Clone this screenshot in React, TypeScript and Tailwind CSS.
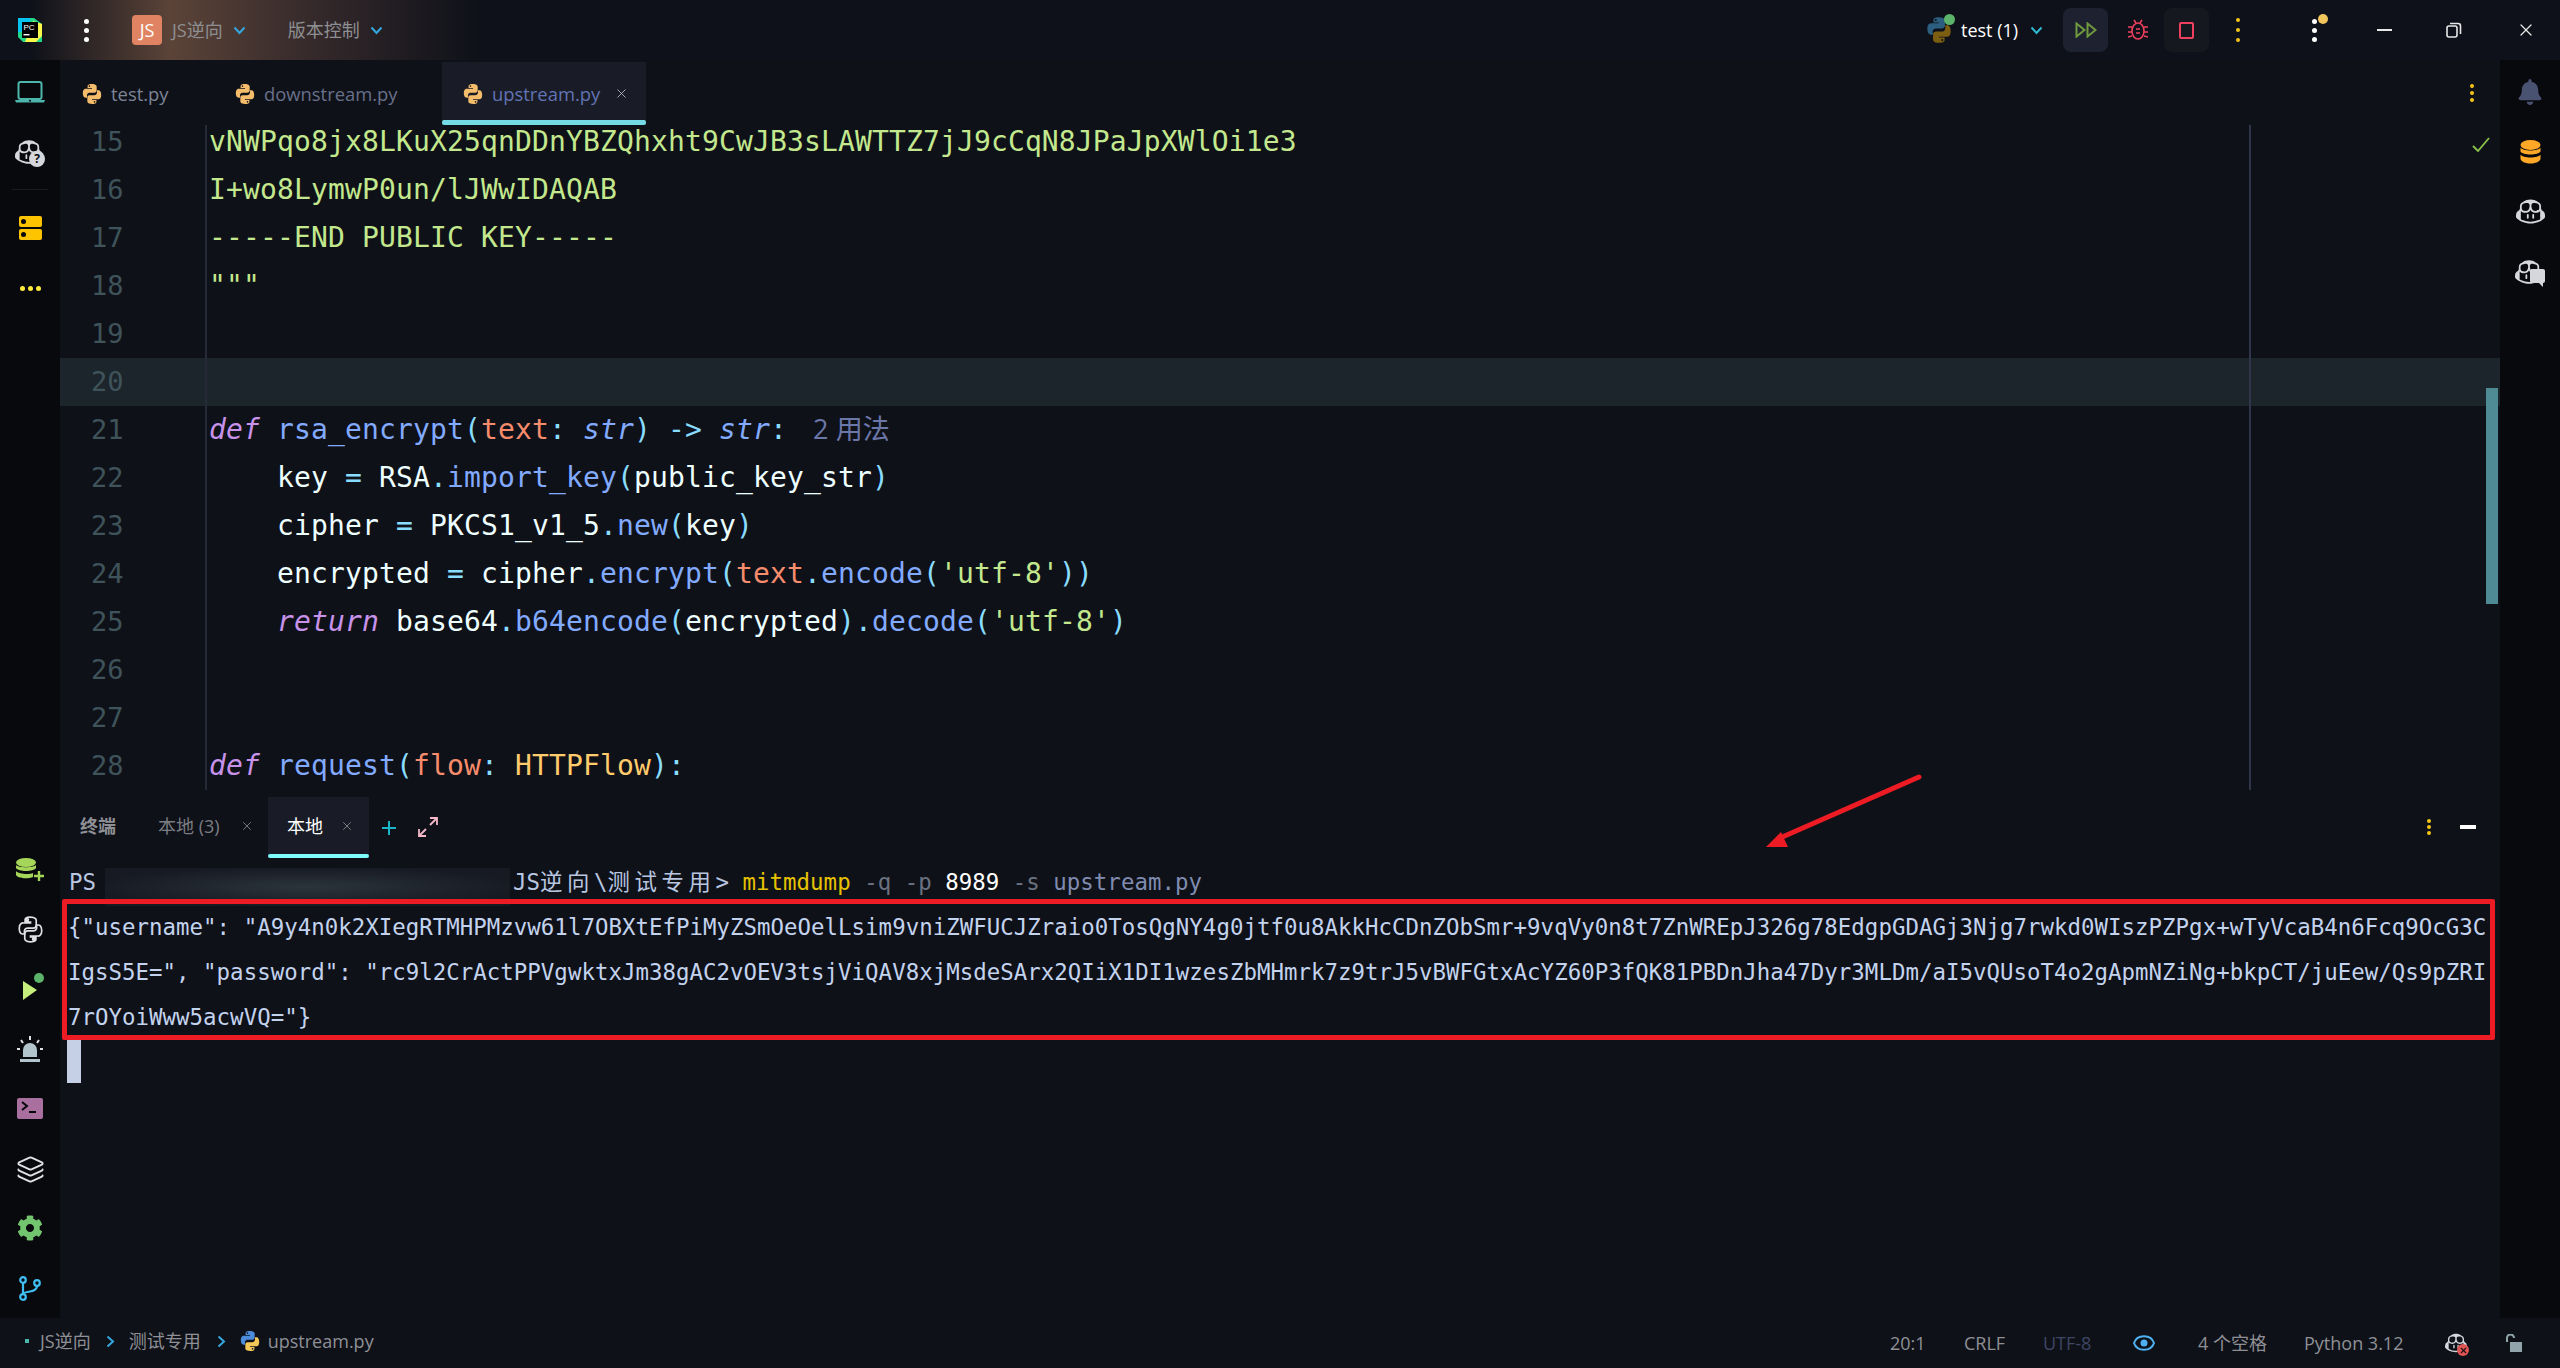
import type { ReactNode } from 'react'
import { GoCopilot } from 'react-icons/go'
import { FaBell, FaCog } from 'react-icons/fa'
import { Layers, X } from 'lucide-react'

const ui = "font-['Open_Sans','Noto_Sans_CJK_SC',sans-serif]"
const mono = "font-['DejaVu_Sans_Mono','Noto_Sans_CJK_SC',monospace]"

const pyTop = 'M11.9 1C6.9 1 7.2 3.2 7.2 3.2v2.3h4.8v.7H5.3S2 5.8 2 11s2.9 5 2.9 5h1.7v-2.4s-.1-2.9 2.9-2.9h4.9s2.7 0 2.7-2.7V3.7S17 1 11.9 1zM9.2 2.5a.9.9 0 110 1.8.9.9 0 010-1.8z'
const pyBottom = 'M12.1 23c5 0 4.7-2.2 4.7-2.2v-2.3H12v-.7h6.7S22 18.2 22 13s-2.9-5-2.9-5h-1.7v2.4s.1 2.9-2.9 2.9H9.6s-2.7 0-2.7 2.7v4.3S7 23 12.1 23zm2.7-1.5a.9.9 0 110-1.8.9.9 0 010 1.8z'

function PyIcon({ size = 22, top = '#f5bd6b', bottom = '#f5bd6b' }: { size?: number; top?: string; bottom?: string }) {
  return (
    <svg width={size} height={size} viewBox="0 0 24 24" className="shrink-0">
      <path fill={top} fillRule="evenodd" d={pyTop} />
      <path fill={bottom} fillRule="evenodd" d={pyBottom} />
    </svg>
  )
}

function Chevron({ className = '' }: { className?: string }) {
  return (
    <svg width="13" height="9" viewBox="0 0 13 9" className={`shrink-0 ${className}`}>
      <path d="M1.5 1.5 6.5 7l5-5.5" fill="none" stroke="currentColor" strokeWidth="2" />
    </svg>
  )
}

function Dots({ className = '', gap = 'gap-[6px]', size = 'size-[4px]' }: { className?: string; gap?: string; size?: string }) {
  return (
    <div className={`flex flex-col ${gap} ${className}`}>
      <span className={`${size} rounded-full bg-current`} />
      <span className={`${size} rounded-full bg-current`} />
      <span className={`${size} rounded-full bg-current`} />
    </div>
  )
}

function TitleBar() {
  return (
    <div className={`${ui} flex h-[60px] shrink-0 items-center bg-[linear-gradient(90deg,#0e1119_30px,#5b4338_170px,#33282a_320px,#0e1119_480px)] text-[18px]`}>
      <svg width="26" height="26" viewBox="0 0 26 26" className="ml-[17px] shrink-0">
        <path d="M1 1h16l8 6v18H6l-5-5z" fill="#21d789" />
        <path d="M1 1h12v14H1z" fill="#07c3f2" />
        <path d="M16 4l9 3v12l-6 6H8z" fill="#fcf84a" />
        <rect x="5" y="5" width="16" height="16" fill="#000" />
        <text x="6.5" y="12.5" fontSize="8" fill="#fff" fontFamily="Liberation Sans">PC</text>
        <rect x="6.5" y="17" width="6" height="1.4" fill="#fff" />
      </svg>
      <Dots className="ml-[41px] text-white" gap="gap-[4px]" size="size-[5px]" />
      <div className="ml-[43px] flex h-[30px] w-[30px] items-center justify-center rounded-[4px] bg-[#e08362] text-[18px] text-white">JS</div>
      <span className="ml-[10px] text-[#8e8f92]">JS逆向</span>
      <Chevron className="ml-[10px] text-[#35a7de]" />
      <span className="ml-[42px] text-[#8e8f92]">版本控制</span>
      <Chevron className="ml-[10px] text-[#35a7de]" />

      <div className="ml-auto flex items-center">
        <div className="relative">
          <PyIcon size={28} top="#2c5f7f" bottom="#7b5e12" />
          <span className="absolute -right-[2px] -top-[2px] size-[11px] rounded-full bg-[#5cb36a]" />
        </div>
        <span className="ml-[8px] w-[62px] text-white">test (1)</span>
        <Chevron className="ml-[7px] text-[#2fb8d0]" />
        <div className="ml-[20px] flex h-[44px] w-[45px] items-center justify-center rounded-[8px] bg-[#1e2130]">
          <svg width="22" height="16" viewBox="0 0 22 16">
            <path d="M1.5 1.5 9.5 8l-8 6.5zM12.5 1.5l8 6.5-8 6.5z" fill="none" stroke="#6f9a3d" strokeWidth="2" />
          </svg>
        </div>
        <div className="ml-[6px] flex w-[47px] justify-center">
          <svg width="20" height="22" viewBox="0 0 20 22" fill="none" stroke="#f0405f" strokeWidth="1.6">
            <ellipse cx="10" cy="12" rx="6" ry="8" />
            <path d="M6 1l2 3M14 1l-2 3M0 8h4M16 8h4M0 13h4M16 13h4M0 18l4-1M20 18l-4-1M8 10h4M8 14h4" />
          </svg>
        </div>
        <div className="ml-[3px] flex h-[44px] w-[45px] items-center justify-center rounded-[8px] bg-[#16181f]">
          <div className="h-[17px] w-[15px] rounded-[2px] border-[2px] border-[#f0405f]" />
        </div>
        <Dots className="ml-[27px] text-[#f5c518]" gap="gap-[6px]" />
        <div className="relative ml-[72px]">
          <Dots className="text-white" gap="gap-[4px]" size="size-[5px]" />
          <span className="absolute -top-[5px] left-[6px] size-[10px] rounded-full bg-[#f2c55c]" />
        </div>
        <div className="ml-[60px] h-[2px] w-[15px] bg-[#e8e8e8]" />
        <svg width="16" height="16" viewBox="0 0 16 16" fill="none" stroke="#e8e8e8" strokeWidth="1.6" className="ml-[54px]">
          <rect x="1" y="4" width="10" height="11" rx="2" />
          <path d="M4 1.5h8a2.5 2.5 0 0 1 2.5 2.5v8" />
        </svg>
        <X size={20} strokeWidth={1.5} className="ml-[54px] mr-[24px] text-[#e8e8e8]" />
      </div>
    </div>
  )
}

function Rail({ className = '', children }: { className?: string; children: ReactNode }) {
  return <div className={`flex w-[60px] shrink-0 flex-col items-center bg-[#08090d] ${className}`}>{children}</div>
}

function LeftRail() {
  return (
    <Rail className="justify-between pb-[17px] pt-[21px]">
      <div className="flex flex-col items-center">
        <svg width="30" height="22" viewBox="0 0 30 22" fill="none">
          <rect x="3.5" y="1" width="23" height="17" rx="2" stroke="#4db6ac" strokeWidth="2" />
          <path d="M0 19h30l-1 2.5H1z" fill="#4db6ac" />
          <circle cx="15" cy="19.8" r="1" fill="#08090d" />
        </svg>
        <div className="relative mt-[35px] h-[28px] w-[30px] text-[#d5d7dc]">
          <GoCopilot size={28} />
          <span className="absolute -bottom-[1px] right-0 flex size-[16px] items-center justify-center rounded-full bg-[#d5d7dc] text-[12px] font-bold leading-none text-[#08090d]">?</span>
        </div>
        <div className="mt-[23px] h-px w-[36px] bg-[#1a1c22]" />
        <div className="mt-[26px] flex flex-col gap-[2px]">
          {[0, 1].map(i => (
            <div key={i} className="flex h-[11px] w-[23px] items-center rounded-[2px] bg-[#ffc400] pl-[2px]">
              <span className="size-[5px] rounded-full bg-[#08090d]" />
            </div>
          ))}
        </div>
        <div className="mt-[46px] flex gap-[3px]">
          <span className="size-[5px] rounded-full bg-[#ffeb3b]" />
          <span className="size-[5px] rounded-full bg-[#ffeb3b]" />
          <span className="size-[5px] rounded-full bg-[#ffeb3b]" />
        </div>
      </div>

      <div className="flex flex-col items-center">
        <svg width="30" height="24" viewBox="0 0 30 24">
          <ellipse cx="11" cy="4.5" rx="10" ry="4.5" fill="#a5d65a" />
          <path d="M1 7c2 3 18 3 20 0v3c-2 4-18 4-20 0zM1 13c2 3 13 4 17 2v4c-4 2-15 2-17-2z" fill="#a5d65a" />
          <path d="M24 13v10M19 18h10" stroke="#a5d65a" strokeWidth="2.4" />
        </svg>
        <svg width="27" height="27" viewBox="0 0 24 24" fill="none" stroke="#dfe1e5" strokeWidth="1.5" className="mt-[34px]">
          <path d={pyTop} />
          <path d={pyBottom} />
        </svg>
        <svg width="22" height="28" viewBox="0 0 22 28" className="ml-[8px] mt-[30px]">
          <path d="M0 8l14 9-14 10z" fill="#c5ee7d" />
          <circle cx="16" cy="5" r="5" fill="#5cb36a" />
        </svg>
        <svg width="26" height="27" viewBox="0 0 26 27" className="mt-[35px]">
          <path d="M6 21v-7a7 7 0 0 1 14 0v7z" fill="#b2c5cd" />
          <rect x="3" y="23" width="20" height="3" fill="#b2c5cd" />
          <path d="M13 0v4M4 4l2 3M22 4l-2 3M0 13h3M23 13h3" stroke="#dfe1e5" strokeWidth="2" />
        </svg>
        <div className="mt-[35px] flex h-[21px] w-[26px] items-start rounded-[2px] bg-[#a9709f] pl-[4px] pt-[3px]">
          <svg width="18" height="14" viewBox="0 0 18 14" fill="none" stroke="#08090d" strokeWidth="2">
            <path d="M1 1l5 4-5 4M8 11h7" />
          </svg>
        </div>
        <Layers size={29} strokeWidth={1.6} className="mt-[36px] text-[#dfe1e5]" />
        <FaCog size={26} className="mt-[31px] text-[#73c46e]" />
        <svg width="22" height="25" viewBox="0 0 22 25" fill="none" stroke="#40bdf2" strokeWidth="2.2" className="mt-[35px]">
          <circle cx="4" cy="4" r="2.800" />
          <circle cx="4" cy="21" r="2.800" />
          <circle cx="18" cy="7" r="2.800" />
          <path d="M4 7v11M18 10c0 4-4 5-7 5.500S4 17 4 18" />
        </svg>
      </div>
    </Rail>
  )
}

function RightRail() {
  return (
    <Rail className="pt-[19px]">
      <FaBell size={26} className="text-[#4a5272]" />
      <svg width="21" height="24" viewBox="0 0 21 24" className="mt-[35px]">
        <ellipse cx="10.500" cy="5" rx="10" ry="5" fill="#ffa726" />
        <path d="M.5 7.500c2 4 18 4 20 0v4c-2 4-18 4-20 0zM.5 14.500c2 4 18 4 20 0V19c-2 6-18 6-20 0z" fill="#ffa726" />
      </svg>
      <GoCopilot size={29} className="mt-[33px] text-[#d5d7dc]" />
      <div className="relative mt-[32px] h-[28px] w-[30px] text-[#d5d7dc]">
        <GoCopilot size={28} />
        <svg width="15" height="18" viewBox="0 0 15 18" className="absolute -bottom-[1px] right-0">
          <path d="M2 0h11a2 2 0 0 1 2 2v10a2 2 0 0 1-2 2v4l-4-4H2a2 2 0 0 1-2-2V2a2 2 0 0 1 2-2z" fill="#d5d7dc" />
        </svg>
      </div>
    </Rail>
  )
}

function FileTab({ name, active, width, text }: { name: string; active?: boolean; width: string; text: string }) {
  return (
    <div className={`relative flex h-[63px] items-center ${width} ${active ? 'bg-[#191c26] pl-[20px]' : 'pl-[21px]'}`}>
      <PyIcon />
      <span className={`ml-[8px] ${text}`}>{name}</span>
      {active && <X size={15} strokeWidth={1.4} className="ml-[14px] text-[#b8bac2]" />}
      {active && <div className="absolute inset-x-0 bottom-0 h-[5px] rounded-[2px] bg-[#74dbe4]" />}
    </div>
  )
}

const C = {
  str: 'text-[#c3e88d]',
  fn: 'text-[#82aaff]',
  kw: 'italic text-[#c792ea]',
  ty: 'italic text-[#82aaff]',
  par: 'text-[#f78c6c]',
  op: 'text-[#89ddff]',
  cls: 'text-[#ffcb6b]',
  txt: 'text-[#eeffff]',
}

function S({ c, children }: { c: string; children: ReactNode }) {
  return <span className={c}>{children}</span>
}

const codeLines: ReactNode[] = [
  <S c={C.str}>vNWPqo8jx8LKuX25qnDDnYBZQhxht9CwJB3sLAWTTZ7jJ9cCqN8JPaJpXWlOi1e3</S>,
  <S c={C.str}>I+wo8LymwP0un/lJWwIDAQAB</S>,
  <S c={C.str}>-----END PUBLIC KEY-----</S>,
  <S c={C.str}>"""</S>,
  null,
  null,
  <>
    <S c={C.kw}>def</S> <S c={C.fn}>rsa_encrypt</S><S c={C.op}>(</S><S c={C.par}>text</S><S c={C.op}>:</S> <S c={C.ty}>str</S><S c={C.op}>)</S> <S c={C.op}>-&gt;</S> <S c={C.ty}>str</S><S c={C.op}>:</S>
    <span className={`${ui} ml-[26px] text-[27px] text-[#6b77a8]`}>2 用法</span>
  </>,
  <>
    {'    '}<S c={C.txt}>key</S> <S c={C.op}>=</S> <S c={C.txt}>RSA</S><S c={C.op}>.</S><S c={C.fn}>import_key</S><S c={C.op}>(</S><S c={C.txt}>public_key_str</S><S c={C.op}>)</S>
  </>,
  <>
    {'    '}<S c={C.txt}>cipher</S> <S c={C.op}>=</S> <S c={C.txt}>PKCS1_v1_5</S><S c={C.op}>.</S><S c={C.fn}>new</S><S c={C.op}>(</S><S c={C.txt}>key</S><S c={C.op}>)</S>
  </>,
  <>
    {'    '}<S c={C.txt}>encrypted</S> <S c={C.op}>=</S> <S c={C.txt}>cipher</S><S c={C.op}>.</S><S c={C.fn}>encrypt</S><S c={C.op}>(</S><S c={C.par}>text</S><S c={C.op}>.</S><S c={C.fn}>encode</S><S c={C.op}>(</S><S c={C.str}>'utf-8'</S><S c={C.op}>))</S>
  </>,
  <>
    {'    '}<S c={C.kw}>return</S> <S c={C.txt}>base64</S><S c={C.op}>.</S><S c={C.fn}>b64encode</S><S c={C.op}>(</S><S c={C.txt}>encrypted</S><S c={C.op}>).</S><S c={C.fn}>decode</S><S c={C.op}>(</S><S c={C.str}>'utf-8'</S><S c={C.op}>)</S>
  </>,
  null,
  null,
  <>
    <S c={C.kw}>def</S> <S c={C.fn}>request</S><S c={C.op}>(</S><S c={C.par}>flow</S><S c={C.op}>:</S> <S c={C.cls}>HTTPFlow</S><S c={C.op}>):</S>
  </>,
]

function Editor() {
  return (
    <div className="relative h-[665px] shrink-0 overflow-hidden">
      <div className="-mt-[7px]">
        {codeLines.map((line, i) => (
          <div key={i} className={`flex h-[48px] items-center ${i === 5 ? 'bg-[#1d252c]' : ''}`}>
            <div className={`${mono} w-[149px] shrink-0 pl-[31px] text-[27px] text-[#3f535a]`}>{i + 15}</div>
            <div className={`${mono} whitespace-pre text-[28px] tracking-[0.14px]`}>{line}</div>
          </div>
        ))}
      </div>
      <div className="absolute left-[145px] top-0 h-full w-[2px] bg-[#262a38]" />
      <div className="absolute left-[2189px] top-0 h-full w-[2px] bg-[#31354a]" />
      <div className="absolute left-[2426px] top-[263px] h-[216px] w-[12px] bg-[#4f8b94]" />
      <svg width="18" height="15" viewBox="0 0 18 15" className="absolute left-[2412px] top-[12px]">
        <path d="M1 9l5 5L17 1" fill="none" stroke="#8bc34a" strokeWidth="1.800" />
      </svg>
    </div>
  )
}

const outputLines = [
  '{"username": "A9y4n0k2XIegRTMHPMzvw61l7OBXtEfPiMyZSmOeOelLsim9vniZWFUCJZraio0TosQgNY4g0jtf0u8AkkHcCDnZObSmr+9vqVy0n8t7ZnWREpJ326g78EdgpGDAGj3Njg7rwkd0WIszPZPgx+wTyVcaB4n6Fcq9OcG3C',
  'IgsS5E=", "password": "rc9l2CrActPPVgwktxJm38gAC2vOEV3tsjViQAV8xjMsdeSArx2QIiX1DI1wzesZbMHmrk7z9trJ5vBWFGtxAcYZ60P3fQK81PBDnJha47Dyr3MLDm/aI5vQUsoT4o2gApmNZiNg+bkpCT/juEew/Qs9pZRI',
  '7rOYoiWww5acwVQ="}',
]

function Terminal() {
  return (
    <div className="flex min-h-0 flex-1 flex-col">
      <div className={`${ui} flex h-[68px] shrink-0 items-end text-[18px]`}>
        <div className="flex h-[61px] w-[98px] items-center pb-[3px] pl-[20px] font-bold text-[#8e9095]">终端</div>
        <div className="flex h-[61px] w-[110px] items-center pb-[3px] text-[#7b7d82]">
          <span>本地 (3)</span>
          <X size={14} strokeWidth={1.4} className="ml-[20px] text-[#8e9095]" />
        </div>
        <div className="relative flex h-[61px] w-[101px] items-center pb-[3px] pl-[19px] bg-[#191c26] text-white">
          <span>本地</span>
          <X size={14} strokeWidth={1.4} className="ml-[17px] text-[#8e9095]" />
          <div className="absolute inset-x-0 bottom-0 h-[4px] rounded-[2px] bg-[#7dfdff]" />
        </div>
        <svg width="16" height="16" viewBox="0 0 16 16" className="mb-[22px] ml-[12px]">
          <path d="M8 1v14M1 8h14" stroke="#19b5c9" strokeWidth="2" />
        </svg>
        <svg width="20" height="20" viewBox="0 0 20 20" fill="none" stroke="#f4b8c8" strokeWidth="1.800" className="mb-[21px] ml-[21px]">
          <path d="M12 1h7v7M19 1l-7 7M8 19H1v-7M1 19l7-7" />
        </svg>
        <Dots className="mb-[23px] ml-auto text-[#f5c518]" gap="gap-[2px]" size="size-[4px]" />
        <div className="mb-[29px] ml-[29px] mr-[24px] h-[4px] w-[16px] bg-white" />
      </div>

      <div className={`${mono} flex h-[48px] shrink-0 items-center whitespace-pre pl-[9px] pt-[2px] text-[22.4px] tracking-[0.03px] text-[#b8c6e0]`}>
        <span>PS</span>
        <div className="ml-[9px] mt-[8px] h-[38px] w-[405px] shrink-0 bg-[radial-gradient(ellipse_at_center,#2a343c_0%,#171a22_75%)]" />
        <span className="ml-[3px]">JS<span className="tracking-[4.6px]">逆向</span>\<span className="tracking-[4.6px]">测试专用</span>&gt; </span>
        <span className="text-[#e6c200]">mitmdump</span>
        <span className="text-[#6b7280]"> -q -p </span>
        <span className="text-white">8989</span>
        <span className="text-[#6b7280]"> -s </span>
        <span className="text-[#7f8cb0]">upstream.py</span>
      </div>

      <div className={`${mono} z-10 -mt-[7px] ml-[2px] h-[141px] w-[2433px] shrink-0 overflow-hidden rounded-[2px] border-[5px] border-[#ed1c24] pl-[1px] pt-px text-[22.4px] leading-[45px] tracking-[0.03px] text-[#c3d3ee]`}>
        {outputLines.map(line => (
          <div key={line} className="whitespace-pre">{line}</div>
        ))}
      </div>
      <div className="ml-[7px] h-[43px] w-[14px] shrink-0 bg-[#c5d0e6]" />
    </div>
  )
}

function StatusBar() {
  return (
    <div className={`${ui} flex h-[50px] shrink-0 items-center text-[18px] text-[#8e9095]`}>
      <div className="flex items-center pb-[4px]">
        <span className="ml-[25px] size-[4px] bg-[#4db6ac]" />
        <span className="ml-[11px]">JS逆向</span>
        <Chevron className="ml-[13px] -rotate-90 text-[#35a7de]" />
        <span className="ml-[12px]">测试专用</span>
        <Chevron className="ml-[14px] -rotate-90 text-[#35a7de]" />
        <span className="ml-[11px]"><PyIcon top="#4b8bdc" bottom="#f5c85a" /></span>
        <span className="ml-[7px]">upstream.py</span>
      </div>

      <div className="ml-auto flex items-center pr-[38px]">
        <span className="w-[74px]">20:1</span>
        <span className="w-[79px]">CRLF</span>
        <span className="w-[90px] text-[#3d4663]">UTF-8</span>
        <svg width="22" height="16" viewBox="0 0 22 16" className="mr-[43px]">
          <path d="M1 8c3-9 17-9 20 0-3 9-17 9-20 0z" fill="none" stroke="#4fb0f0" strokeWidth="2" />
          <circle cx="11" cy="8" r="3.500" fill="#4fb0f0" />
        </svg>
        <span className="w-[106px]">4 个空格</span>
        <span className="w-[141px]">Python 3.12</span>
        <div className="relative h-[22px] w-[22px] text-[#d5d7dc]">
          <GoCopilot size={22} />
          <span className="absolute -bottom-[2px] -right-[2px] flex size-[12px] items-center justify-center rounded-full bg-[#e05555]">
            <X size={9} strokeWidth={3} className="text-[#1a1010]" />
          </span>
        </div>
        <svg width="17" height="18" viewBox="0 0 17 18" fill="none" className="ml-[38px]">
          <path d="M2 8V4a3.500 3.500 0 0 1 7 0" stroke="#92a4ab" strokeWidth="2" />
          <rect x="5" y="8" width="12" height="10" fill="#92a4ab" />
        </svg>
      </div>
    </div>
  )
}

export default function App() {
  return (
    <div className="relative flex h-[1368px] w-[2560px] flex-col overflow-hidden bg-[#0f1119]">
      <TitleBar />
      <div className="flex min-h-0 flex-1">
        <LeftRail />
        <div className="flex min-w-0 flex-1 flex-col">
          <div className={`${ui} flex h-[65px] shrink-0 items-start pt-[2px] text-[18.4px]`}>
            <FileTab name="test.py" width="w-[153px]" text="text-[#7b8496]" />
            <FileTab name="downstream.py" width="w-[229px]" text="text-[#68708a]" />
            <FileTab name="upstream.py" active width="w-[204px]" text="text-[#6273b5]" />
            <Dots className="ml-auto mr-[26px] mt-[22px] text-[#f5c518]" gap="gap-[3px]" size="size-[4px]" />
          </div>
          <Editor />
          <Terminal />
        </div>
        <RightRail />
      </div>
      <StatusBar />

      {/* annotation arrow */}
      <svg width="170" height="80" viewBox="0 0 170 80" className="absolute left-[1760px] top-[772px]">
        <path d="M159 5 20 66" stroke="#ed1c24" strokeWidth="5" strokeLinecap="round" />
        <path d="M6 75l15-15 7 15z" fill="#ed1c24" />
      </svg>
    </div>
  )
}
